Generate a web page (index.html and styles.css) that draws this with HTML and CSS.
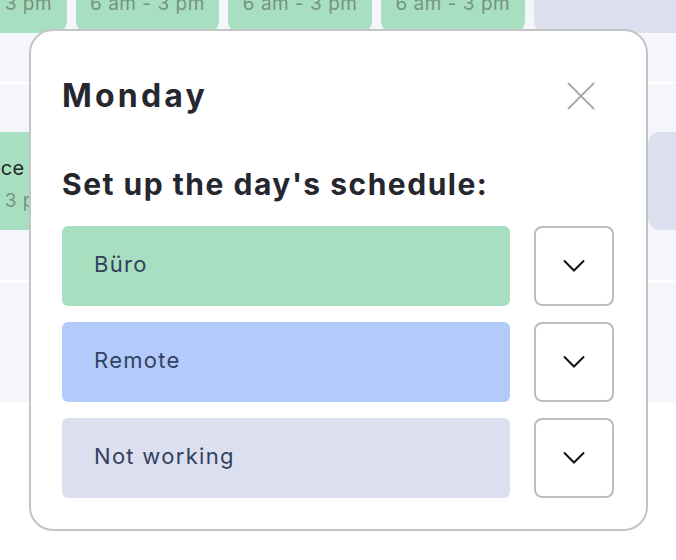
FILE: index.html
```html
<!DOCTYPE html>
<html lang="en">
<head>
<meta charset="utf-8">
<title>Monday schedule</title>
<link rel="stylesheet" href="styles.css">
</head>
<body>
  <div class="calendar">
    <div class="week-row week-row--first">
      <div class="shift shift--office"><span class="shift-title">Office</span><span class="shift-time">6 am - 3 pm</span></div>
      <div class="shift shift--office"><span class="shift-title">Office</span><span class="shift-time">6 am - 3 pm</span></div>
      <div class="shift shift--office"><span class="shift-title">Office</span><span class="shift-time">6 am - 3 pm</span></div>
      <div class="shift shift--office"><span class="shift-title">Office</span><span class="shift-time">6 am - 3 pm</span></div>
      <div class="shift shift--off"></div>
    </div>
    <div class="week-row week-row--second">
      <div class="shift shift--office"><span class="shift-title">Office</span><span class="shift-time">6 am - 3 pm</span></div>
      <div class="slot"></div>
      <div class="slot"></div>
      <div class="slot"></div>
      <div class="shift shift--off shift--late"></div>
    </div>
    <div class="week-row week-row--third"></div>
  </div>

  <div class="modal" role="dialog" aria-labelledby="modal-title">
    <div class="modal-header">
      <h2 class="modal-title" id="modal-title">Monday</h2>
      <button class="close-btn" type="button" aria-label="Close">
        <svg width="28" height="28" viewBox="0 0 28 28" aria-hidden="true">
          <line x1="1" y1="1" x2="27" y2="27"/>
          <line x1="27" y1="1" x2="1" y2="27"/>
        </svg>
      </button>
    </div>
    <h3 class="modal-subtitle">Set up the day's schedule:</h3>
    <ul class="options">
      <li class="option-row">
        <div class="option option--office">Büro</div>
        <button class="option-toggle" type="button" aria-label="Expand Büro">
          <svg width="24" height="14" viewBox="0 0 24 14" aria-hidden="true"><polyline points="2,1.5 12,11.5 22,1.5"/></svg>
        </button>
      </li>
      <li class="option-row">
        <div class="option option--remote">Remote</div>
        <button class="option-toggle" type="button" aria-label="Expand Remote">
          <svg width="24" height="14" viewBox="0 0 24 14" aria-hidden="true"><polyline points="2,1.5 12,11.5 22,1.5"/></svg>
        </button>
      </li>
      <li class="option-row">
        <div class="option option--off">Not working</div>
        <button class="option-toggle" type="button" aria-label="Expand Not working">
          <svg width="24" height="14" viewBox="0 0 24 14" aria-hidden="true"><polyline points="2,1.5 12,11.5 22,1.5"/></svg>
        </button>
      </li>
    </ul>
  </div>
</body>
</html>
```
FILE: styles.css
```css
* {
  box-sizing: border-box;
}

html, body {
  margin: 0;
  padding: 0;
  background: #ffffff;
  font-family: Inter, "Noto Sans", sans-serif;
  overflow: hidden;
}

/* Week grid behind the dialog */
.calendar {
  display: flex;
  flex-direction: column;
  gap: 2px;
  background: #ffffff;
  overflow: hidden;
}

.week-row {
  display: grid;
  grid-template-columns: repeat(5, 143.5px);
  column-gap: 9.2px;
  align-items: start;
  margin-left: -77px;
  background: #f5f6fc;
  overflow: hidden;
}

.week-row--first {
  height: 82px;
}

.week-row--first .shift {
  margin-top: -65px;
}

.week-row--second {
  height: 196px;
  padding-top: 48px;
}

.week-row--third {
  height: 120px;
}

.shift {
  display: flex;
  flex-direction: column;
  align-items: center;
  gap: 8px;
  height: 98px;
  padding-top: 23px;
  border-radius: 12px;
  text-align: center;
  white-space: nowrap;
}

.shift--office {
  background: #a8dfc0;
}

.shift--off {
  background: #dcdfee;
  width: 160px;
}

.shift--late {
  margin-left: 114px;
}

.shift-title {
  font-size: 20px;
  line-height: 26px;
  font-weight: 400;
  letter-spacing: 0.4px;
  color: #22262f;
}

.shift-time {
  font-size: 19px;
  line-height: 24px;
  letter-spacing: 0.5px;
  color: #76937f;
}

/* Dialog */
.modal {
  position: absolute;
  left: 29px;
  top: 29px;
  width: 619px;
  padding: 45px 32px 31px 31px;
  background: #ffffff;
  border: 2px solid #c4c4c4;
  border-radius: 24px;
}

.modal-header {
  display: flex;
  align-items: center;
  justify-content: space-between;
}

.modal-title {
  margin: 0;
  font-size: 32px;
  line-height: 40px;
  font-weight: 700;
  letter-spacing: 3.2px;
  color: #25272e;
}

.close-btn {
  display: flex;
  padding: 0;
  margin-right: 19px;
  border: 0;
  background: none;
  cursor: pointer;
}

.close-btn line {
  stroke: #a9a9a9;
  stroke-width: 2;
}

.modal-subtitle {
  margin: 50px 0 24px;
  font-size: 30px;
  line-height: 36px;
  font-weight: 700;
  letter-spacing: 1.5px;
  color: #25272e;
}

.options {
  display: flex;
  flex-direction: column;
  gap: 16px;
  margin: 0;
  padding: 0;
  list-style: none;
}

.option-row {
  display: flex;
  gap: 24px;
}

.option {
  flex: 1;
  display: flex;
  align-items: center;
  height: 80px;
  padding: 0 32px 5px;
  border-radius: 6px;
  font-size: 22px;
  letter-spacing: 1.3px;
  color: #33415f;
}

.option--office {
  background: #a8dfc0;
}

.option--remote {
  background: #b2cbfb;
}

.option--off {
  background: #dcdfee;
}

.option-toggle {
  display: flex;
  align-items: center;
  justify-content: center;
  width: 80px;
  height: 80px;
  padding: 0;
  background: #ffffff;
  border: 2px solid #bdbdbd;
  border-radius: 8px;
  cursor: pointer;
}

.option-toggle polyline {
  fill: none;
  stroke: #111111;
  stroke-width: 2;
}
```
